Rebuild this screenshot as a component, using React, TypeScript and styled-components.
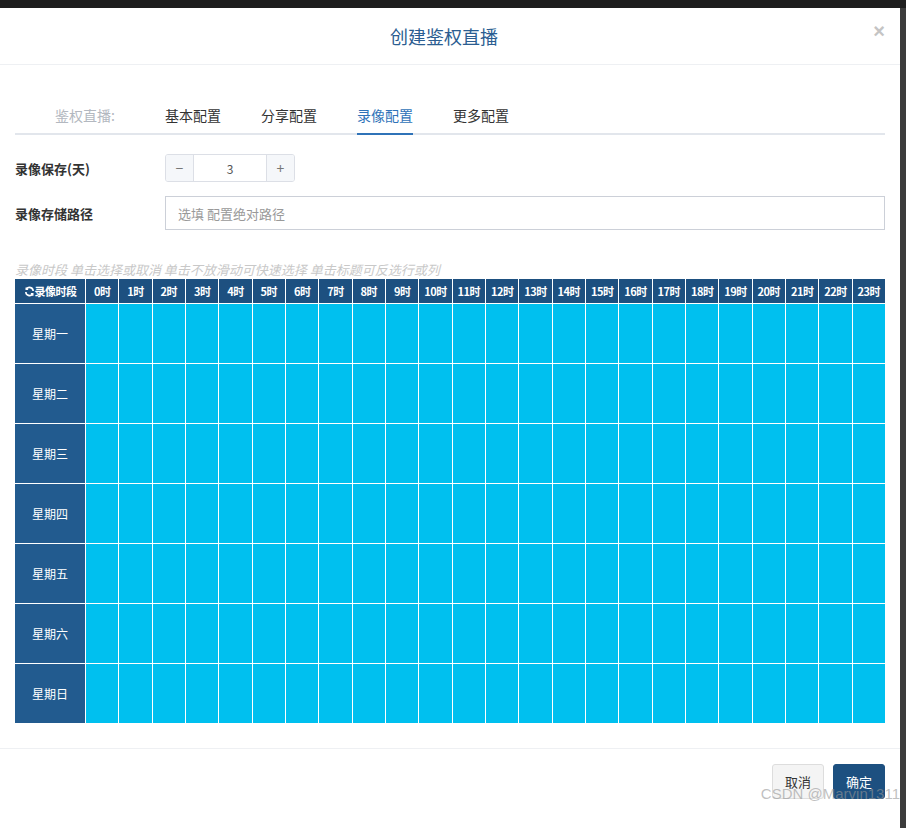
import React from 'react'
import styled, { createGlobalStyle } from 'styled-components'

const GlobalStyle = createGlobalStyle`
  html, body { margin: 0; padding: 0; background: #4a4a4a; }
  body { font-family: "Microsoft YaHei", "Noto Sans CJK SC", "Liberation Sans", sans-serif; }
`

const Page = styled.div`
  width: 906px;
  height: 828px;
  overflow: hidden;
  background: #3c3c3c;
  border-top: 8px solid #1e1e1e;
  box-sizing: border-box;
`

const Modal = styled.div`
  width: 900px;
  height: 820px;
  background: #fff;
  display: flex;
  flex-direction: column;
`

const Header = styled.div`
  height: 56px;
  border-bottom: 1px solid #eef0f3;
  display: flex;
  align-items: center;
  justify-content: center;
  position: relative;
`

const Title = styled.h4`
  margin: 0;
  font-size: 18px;
  font-weight: 400;
  color: #2b5d91;
  padding-right: 12px;
`

const Close = styled.span`
  position: absolute;
  right: 15px;
  top: 12px;
  font-size: 20px;
  color: #c4c4c4;
  font-family: "Liberation Sans", sans-serif;
  font-weight: 700;
`

const Body = styled.div`
  flex: 1;
  padding: 34px 15px 0;
`

const Tabs = styled.div`
  display: flex;
  border-bottom: 2px solid #e2e6ec;
  height: 34px;
  align-items: stretch;
  padding-left: 40px;
  gap: 40px;
`

const Tab = styled.div<{ active?: boolean; muted?: boolean }>`
  font-size: 14px;
  color: ${({ active, muted }) => (active ? '#2f73b8' : muted ? '#b3b8c0' : '#333')};
  border-bottom: 2px solid ${({ active }) => (active ? '#2f73b8' : 'transparent')};
  margin-bottom: -2px;
  display: flex;
  align-items: center;
  padding-bottom: 2px;
  margin-right: ${({ muted }) => (muted ? '10px' : '0')};
`

const FormRow = styled.div<{ gapTop?: number }>`
  display: flex;
  align-items: center;
  margin-top: ${({ gapTop }) => gapTop ?? 19}px;
`

const Label = styled.label`
  width: 150px;
  font-size: 13px;
  font-weight: 700;
  color: #333;
`

const Stepper = styled.div`
  display: flex;
  width: 128px;
  height: 26px;
  border: 1px solid #dcdfe6;
  border-radius: 3px;
  overflow: hidden;
`

const StepBtn = styled.div`
  width: 27px;
  background: #f5f7fa;
  color: #777;
  display: flex;
  align-items: center;
  justify-content: center;
  font-size: 14px;
`

const StepValue = styled.div`
  flex: 1;
  border-left: 1px solid #dcdfe6;
  border-right: 1px solid #dcdfe6;
  display: flex;
  align-items: center;
  justify-content: center;
  font-size: 12px;
  color: #555;
`

const Input = styled.input`
  flex: 1;
  height: 34px;
  border: 1px solid #ccd0d8;
  padding: 0 12px;
  font-size: 13px;
  font-family: inherit;
  box-sizing: border-box;
  &::placeholder { color: #999; }
`

const Hint = styled.div`
  margin-top: 30px;
  font-size: 13px;
  font-style: italic;
  color: #c8c8c8;
  height: 19px;
`

const Grid = styled.div`
  display: grid;
  grid-template-columns: 70px repeat(24, 1fr);
  grid-template-rows: 24px repeat(7, 59px);
  background: #fff;
  gap: 1px;
  width: 870px;
`

const HeadCell = styled.div`
  background: #1d5080;
  color: #fff;
  font-size: 11px;
  font-weight: 700;
  display: flex;
  align-items: center;
  justify-content: center;
  white-space: nowrap;
  letter-spacing: -0.5px;
`

const DayCell = styled(HeadCell)`
  background: #225b8f;
  font-weight: 400;
  font-size: 12px;
  letter-spacing: 0;
`

const Slot = styled.div<{ on: boolean }>`
  background: ${({ on }) => (on ? '#00c0ef' : '#fff')};
`

const Footer = styled.div`
  border-top: 1px solid #eef0f3;
  height: 64px;
  display: flex;
  justify-content: flex-end;
  align-items: flex-start;
  padding: 15px 15px 0;
  gap: 9px;
  position: relative;
`

const Button = styled.button<{ primary?: boolean }>`
  height: 35px;
  padding: 0 12px;
  font-size: 13px;
  font-family: inherit;
  border-radius: 3px;
  border: 1px solid ${({ primary }) => (primary ? '#1d5080' : '#ddd')};
  background: ${({ primary }) => (primary ? '#1d5080' : '#f4f4f4')};
  color: ${({ primary }) => (primary ? '#fff' : '#333')};
`

const Watermark = styled.span`
  position: absolute;
  right: 0;
  top: 36px;
  font-family: "Liberation Sans", sans-serif;
  font-size: 15px;
  color: rgba(150, 150, 150, 0.6);
`

const days = ['星期一', '星期二', '星期三', '星期四', '星期五', '星期六', '星期日']
const hours = Array.from({ length: 24 }, (_, i) => i)

const App: React.FC = () => (
  <>
    <GlobalStyle />
    <Page>
      <Modal>
        <Header>
          <Title>创建鉴权直播</Title>
          <Close>×</Close>
        </Header>
        <Body>
          <Tabs>
            <Tab muted>鉴权直播:</Tab>
            <Tab>基本配置</Tab>
            <Tab>分享配置</Tab>
            <Tab active>录像配置</Tab>
            <Tab>更多配置</Tab>
          </Tabs>
          <FormRow>
            <Label>录像保存(天)</Label>
            <Stepper>
              <StepBtn>−</StepBtn>
              <StepValue>3</StepValue>
              <StepBtn>+</StepBtn>
            </Stepper>
          </FormRow>
          <FormRow gapTop={14}>
            <Label>录像存储路径</Label>
            <Input placeholder="选填 配置绝对路径" />
          </FormRow>
          <Hint>录像时段 单击选择或取消 单击不放滑动可快速选择 单击标题可反选行或列</Hint>
          <Grid>
            <HeadCell>
              <svg width="11" height="11" viewBox="0 0 24 24" fill="none" stroke="#fff" strokeWidth="3.5">
                <path d="M20 11a8 8 0 0 0-14.5-4.5M4 13a8 8 0 0 0 14.5 4.5" />
                <path d="M5 3v4h4M19 21v-4h-4" />
              </svg>
              录像时段
            </HeadCell>
            {hours.map((h) => (
              <HeadCell key={h}>{h}时</HeadCell>
            ))}
            {days.map((d) => (
              <React.Fragment key={d}>
                <DayCell>{d}</DayCell>
                {hours.map((h) => (
                  <Slot key={h} on />
                ))}
              </React.Fragment>
            ))}
          </Grid>
        </Body>
        <Footer>
          <Button>取消</Button>
          <Button primary>确定</Button>
          <Watermark>CSDN @Marvin1311</Watermark>
        </Footer>
      </Modal>
    </Page>
  </>
)

export default App
